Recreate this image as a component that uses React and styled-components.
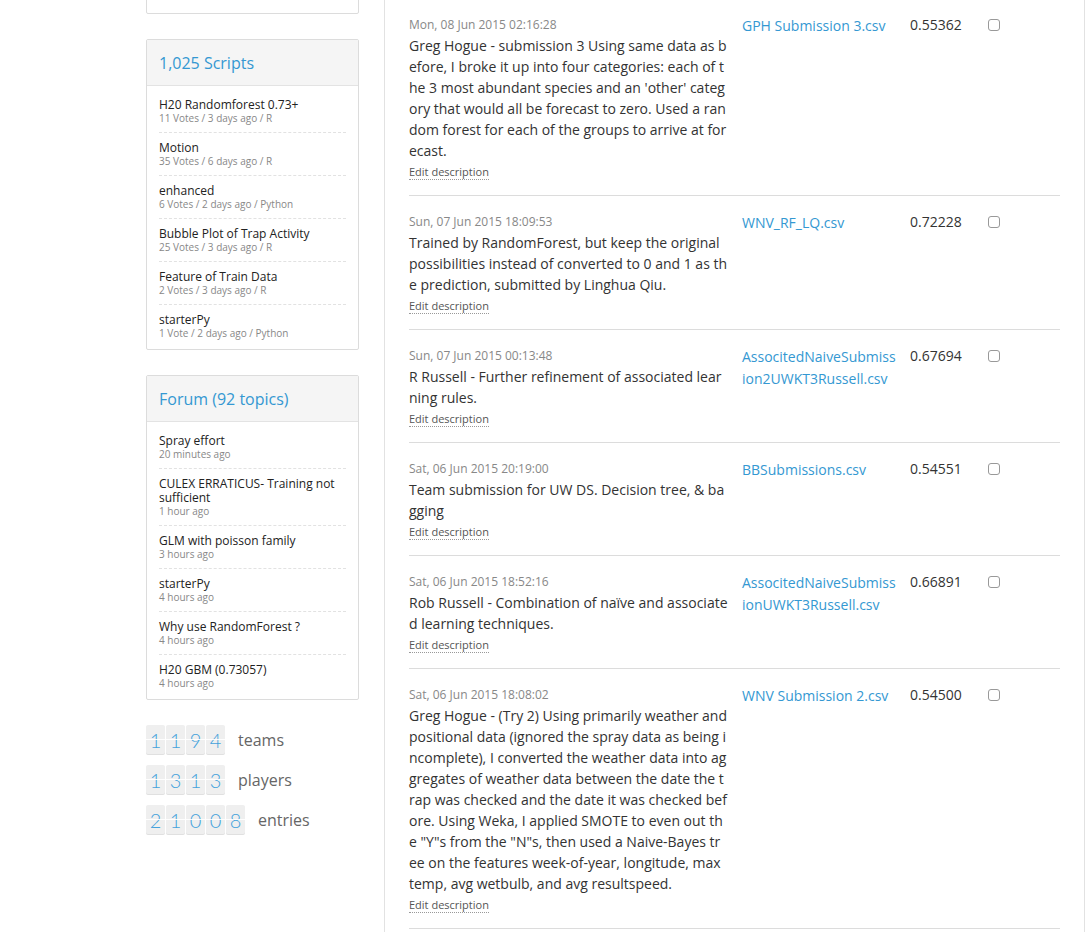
import styled, { createGlobalStyle } from 'styled-components';

const GlobalStyle = createGlobalStyle`
    body {
        margin: 0;
        background: #fff;
        font-family: "Open Sans", "Liberation Sans", sans-serif;
        color: #333;
    }
`;

const Page = styled.div`
    display: flex;
    align-items: flex-start;
    margin-top: -31px;
    padding-left: 146px;
    gap: 25px;
`;

const Sidebar = styled.aside`
    width: 213px;
    display: flex;
    flex-direction: column;
    gap: 25px;
    flex-shrink: 0;
`;

const Box = styled.div`
    border: 1px solid #dcdcdc;
    border-radius: 2px;
    background: #fff;
    box-sizing: border-box;
    height: ${(p) => (p.$h ? p.$h + 'px' : 'auto')};
`;

const BoxHead = styled.div`
    height: 45px;
    display: flex;
    align-items: center;
    padding: 0 12px;
    background: #f5f5f5;
    border-bottom: 1px solid #e3e3e3;
    font-size: 16px;
    color: #3498d2;
`;

const List = styled.ul`
    list-style: none;
    margin: 0;
    padding: 4px 12px 2px;
`;

const Item = styled.li`
    padding: 8px 0;
    border-bottom: 1px dashed #e2e2e2;
    &:last-child {
        border-bottom: none;
    }
`;

const ItemTitle = styled.div`
    font-size: 12px;
    line-height: 14px;
    color: #222;
`;

const ItemMeta = styled.div`
    font-size: 10px;
    line-height: 12px;
    color: #888;
`;

const Counters = styled.div`
    display: flex;
    flex-direction: column;
    gap: 11px;
`;

const CounterRow = styled.div`
    display: flex;
    align-items: center;
    gap: 13px;
`;

const Digits = styled.div`
    display: flex;
    gap: 1px;
`;

const Digit = styled.span`
    position: relative;
    width: 19px;
    height: 29px;
    display: flex;
    align-items: center;
    justify-content: center;
    background: #efefef;
    border-radius: 2px;
    box-shadow: 0 1px 0 #e0e0e0;
    font-family: "Lato", "Open Sans", sans-serif;
    font-weight: 300;
    font-size: 20px;
    color: #44a2dc;
    &::after {
        content: '';
        position: absolute;
        left: 0;
        right: 0;
        top: 14px;
        height: 1px;
        background: rgba(255, 255, 255, 0.9);
    }
`;

const CounterLabel = styled.span`
    font-size: 16px;
    color: #666;
`;

const Main = styled.main`
    width: 701px;
    box-sizing: border-box;
    padding: 30px 24px 0;
    border-left: 1px solid #e2e2e2;
    border-right: 1px solid #e2e2e2;
    min-height: 1000px;
`;

const Row = styled.div`
    display: grid;
    grid-template-columns: 320px 155px 65px auto;
    column-gap: 13px;
    padding: 15px 0;
    border-bottom: 1px solid #dcdcdc;
`;

const Desc = styled.div`
    padding-right: 1px;
    word-break: break-all;
`;

const Date = styled.div`
    font-size: 12px;
    line-height: 21px;
    color: #888;
`;

const Text = styled.div`
    font-size: 14px;
    line-height: 21px;
    color: #333;
`;

const Edit = styled.div`
    width: fit-content;
    margin-top: 4px;
    font-size: 11px;
    line-height: 14px;
    color: #555;
    border-bottom: 1px dotted #999;
`;

const FileLink = styled.a`
    font-size: 14px;
    line-height: 21px;
    color: #3498d2;
    text-decoration: none;
    word-break: break-all;
`;

const Score = styled.div`
    font-size: 14px;
    line-height: 21px;
    color: #333;
`;

const Check = styled.input`
    appearance: none;
    width: 12px;
    height: 12px;
    margin: 5px 0 0;
    border: 1px solid #999;
    border-radius: 3px;
    background: #fff;
`;

const scripts = [
    ['H20 Randomforest 0.73+', '11 Votes / 3 days ago / R'],
    ['Motion', '35 Votes / 6 days ago / R'],
    ['enhanced', '6 Votes / 2 days ago / Python'],
    ['Bubble Plot of Trap Activity', '25 Votes / 3 days ago / R'],
    ['Feature of Train Data', '2 Votes / 3 days ago / R'],
    ['starterPy', '1 Vote / 2 days ago / Python'],
];

const topics = [
    ['Spray effort', '20 minutes ago'],
    ['CULEX ERRATICUS- Training not sufficient', '1 hour ago'],
    ['GLM with poisson family', '3 hours ago'],
    ['starterPy', '4 hours ago'],
    ['Why use RandomForest ?', '4 hours ago'],
    ['H20 GBM (0.73057)', '4 hours ago'],
];

const counters = [
    ['1194', 'teams'],
    ['1313', 'players'],
    ['21008', 'entries'],
];

const subs = [
    {
        date: 'Mon, 08 Jun 2015 02:16:28',
        text: "Greg Hogue - submission 3 Using same data as before, I broke it up into four categories: each of the 3 most abundant species and an 'other' category that would all be forecast to zero. Used a random forest for each of the groups to arrive at forecast.",
        file: 'GPH Submission 3.csv',
        score: '0.55362',
    },
    {
        date: 'Sun, 07 Jun 2015 18:09:53',
        text: 'Trained by RandomForest, but keep the original possibilities instead of converted to 0 and 1 as the prediction, submitted by Linghua Qiu.',
        file: 'WNV_RF_LQ.csv',
        score: '0.72228',
    },
    {
        date: 'Sun, 07 Jun 2015 00:13:48',
        text: 'R Russell - Further refinement of associated learning rules.',
        file: 'AssocitedNaiveSubmission2UWKT3Russell.csv',
        score: '0.67694',
    },
    {
        date: 'Sat, 06 Jun 2015 20:19:00',
        text: 'Team submission for UW DS. Decision tree, & bagging',
        file: 'BBSubmissions.csv',
        score: '0.54551',
    },
    {
        date: 'Sat, 06 Jun 2015 18:52:16',
        text: 'Rob Russell - Combination of naïve and associated learning techniques.',
        file: 'AssocitedNaiveSubmissionUWKT3Russell.csv',
        score: '0.66891',
    },
    {
        date: 'Sat, 06 Jun 2015 18:08:02',
        text: 'Greg Hogue - (Try 2) Using primarily weather and positional data (ignored the spray data as being incomplete), I converted the weather data into aggregates of weather data between the date the trap was checked and the date it was checked before. Using Weka, I applied SMOTE to even out the "Y"s from the "N"s, then used a Naive-Bayes tree on the features week-of-year, longitude, max temp, avg wetbulb, and avg resultspeed.',
        file: 'WNV Submission 2.csv',
        score: '0.54500',
    },
];

const App = () => {
    return (
        <>
            <GlobalStyle />
            <Page>
                <Sidebar>
                    <Box $h={45} />
                    <Box>
                        <BoxHead>1,025 Scripts</BoxHead>
                        <List>
                            {scripts.map((v, i) => (
                                <Item key={i}>
                                    <ItemTitle>{v[0]}</ItemTitle>
                                    <ItemMeta>{v[1]}</ItemMeta>
                                </Item>
                            ))}
                        </List>
                    </Box>
                    <Box>
                        <BoxHead>Forum (92 topics)</BoxHead>
                        <List>
                            {topics.map((v, i) => (
                                <Item key={i}>
                                    <ItemTitle>{v[0]}</ItemTitle>
                                    <ItemMeta>{v[1]}</ItemMeta>
                                </Item>
                            ))}
                        </List>
                    </Box>
                    <Counters>
                        {counters.map((c) => (
                            <CounterRow key={c[1]}>
                                <Digits>
                                    {c[0].split('').map((d, i) => (
                                        <Digit key={i}>{d}</Digit>
                                    ))}
                                </Digits>
                                <CounterLabel>{c[1]}</CounterLabel>
                            </CounterRow>
                        ))}
                    </Counters>
                </Sidebar>
                <Main>
                    {subs.map((s, i) => (
                        <Row key={i}>
                            <Desc>
                                <Date>{s.date}</Date>
                                <Text>{s.text}</Text>
                                <Edit>Edit description</Edit>
                            </Desc>
                            <div>
                                <FileLink href="#">{s.file}</FileLink>
                            </div>
                            <Score>{s.score}</Score>
                            <div>
                                <Check type="checkbox" />
                            </div>
                        </Row>
                    ))}
                </Main>
            </Page>
        </>
    );
};

export default App;
